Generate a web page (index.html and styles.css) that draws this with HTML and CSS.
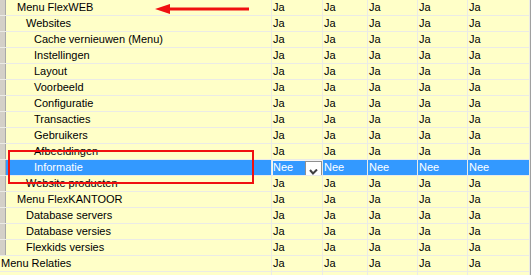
FILE: index.html
```html
<!DOCTYPE html>
<html lang="en">
<head>
<meta charset="UTF-8">
<title>Rechten</title>
<link rel="stylesheet" href="styles.css">
</head>
<body>
    <div class="grid">
        <div class="row nested"><div class="tree l1">Menu FlexWEB</div><div class="cell">Ja</div><div class="cell">Ja</div><div class="cell">Ja</div><div class="cell">Ja</div><div class="cell">Ja</div></div>
        <div class="row nested"><div class="tree l2">Websites</div><div class="cell">Ja</div><div class="cell">Ja</div><div class="cell">Ja</div><div class="cell">Ja</div><div class="cell">Ja</div></div>
        <div class="row nested"><div class="tree l3">Cache vernieuwen (Menu)</div><div class="cell">Ja</div><div class="cell">Ja</div><div class="cell">Ja</div><div class="cell">Ja</div><div class="cell">Ja</div></div>
        <div class="row nested"><div class="tree l3">Instellingen</div><div class="cell">Ja</div><div class="cell">Ja</div><div class="cell">Ja</div><div class="cell">Ja</div><div class="cell">Ja</div></div>
        <div class="row nested"><div class="tree l3">Layout</div><div class="cell">Ja</div><div class="cell">Ja</div><div class="cell">Ja</div><div class="cell">Ja</div><div class="cell">Ja</div></div>
        <div class="row nested"><div class="tree l3">Voorbeeld</div><div class="cell">Ja</div><div class="cell">Ja</div><div class="cell">Ja</div><div class="cell">Ja</div><div class="cell">Ja</div></div>
        <div class="row nested"><div class="tree l3">Configuratie</div><div class="cell">Ja</div><div class="cell">Ja</div><div class="cell">Ja</div><div class="cell">Ja</div><div class="cell">Ja</div></div>
        <div class="row nested"><div class="tree l3">Transacties</div><div class="cell">Ja</div><div class="cell">Ja</div><div class="cell">Ja</div><div class="cell">Ja</div><div class="cell">Ja</div></div>
        <div class="row nested"><div class="tree l3">Gebruikers</div><div class="cell">Ja</div><div class="cell">Ja</div><div class="cell">Ja</div><div class="cell">Ja</div><div class="cell">Ja</div></div>
        <div class="row nested"><div class="tree l3">Afbeeldingen</div><div class="cell">Ja</div><div class="cell">Ja</div><div class="cell">Ja</div><div class="cell">Ja</div><div class="cell">Ja</div></div>
        <div class="row nested selected">
            <div class="tree l3">Informatie</div>
            <div class="cell editor">
                <span>Nee</span>
                <span class="drop">
                    <svg width="9" height="6" viewBox="0 0 9 6"><path d="M1 1 L4 4.5 L8 0.5" fill="none" stroke="#404040" stroke-width="2"/></svg>
                </span>
            </div>
            <div class="cell">Nee</div><div class="cell">Nee</div><div class="cell">Nee</div><div class="cell">Nee</div>
        </div>
        <div class="row nested"><div class="tree l2">Website producten</div><div class="cell">Ja</div><div class="cell">Ja</div><div class="cell">Ja</div><div class="cell">Ja</div><div class="cell">Ja</div></div>
        <div class="row nested"><div class="tree l1">Menu FlexKANTOOR</div><div class="cell">Ja</div><div class="cell">Ja</div><div class="cell">Ja</div><div class="cell">Ja</div><div class="cell">Ja</div></div>
        <div class="row nested"><div class="tree l2">Database servers</div><div class="cell">Ja</div><div class="cell">Ja</div><div class="cell">Ja</div><div class="cell">Ja</div><div class="cell">Ja</div></div>
        <div class="row nested"><div class="tree l2">Database versies</div><div class="cell">Ja</div><div class="cell">Ja</div><div class="cell">Ja</div><div class="cell">Ja</div><div class="cell">Ja</div></div>
        <div class="row nested"><div class="tree l2">Flexkids versies</div><div class="cell">Ja</div><div class="cell">Ja</div><div class="cell">Ja</div><div class="cell">Ja</div><div class="cell">Ja</div></div>
        <div class="row"><div class="tree l0">Menu Relaties</div><div class="cell">Ja</div><div class="cell">Ja</div><div class="cell">Ja</div><div class="cell">Ja</div><div class="cell">Ja</div></div>
        <div class="row"><div class="tree l0"></div><div class="cell"></div><div class="cell"></div><div class="cell"></div><div class="cell"></div><div class="cell"></div></div>
    </div>

    <!-- annotations drawn over the grid -->
    <svg class="arrow" width="100" height="14" viewBox="0 0 100 14">
        <polygon points="0,7 15,2 15,12" fill="#f01010"/>
        <rect x="14" y="5.5" width="80" height="3" fill="#f01010"/>
    </svg>
    <div class="mark-box"></div>
</body>
</html>
```

FILE: styles.css
```css
body {
    margin: 0;
    padding: 0;
    background-color: #ffffc8;
    font-family: "Liberation Sans", Arial, sans-serif;
    font-size: 11px;
    position: relative;
    overflow: hidden;
    height: 275px;
}

.grid {
    width: 531px;
    border-right: 1px solid #a0a0a0;
    box-sizing: border-box;
}

.row {
    display: grid;
    grid-template-columns: 272px 51px 45px 50px 50px 62px;
    height: 16px;
}

.row > div {
    height: 15px;
    line-height: 15px;
    border-bottom: 1px solid #ebebe6;
    border-right: 1px solid #ebebe6;
    white-space: nowrap;
    overflow: hidden;
    color: #000;
}

.cell {
    padding-left: 1px;
}

.tree.l0 { padding-left: 1px; }
.tree.l1 { padding-left: 17px; }
.tree.l2 { padding-left: 26px; }
.tree.l3 { padding-left: 34px; }

.row.nested .tree {
    background: linear-gradient(to right, #d4d0c8 0 5px, #a8a8a8 5px 6px, transparent 6px);
}

.row.nested .tree::before {
    content: "";
}

.selected > div {
    background-color: #3399ff;
    color: #fff;
}

.row.nested.selected .tree {
    background: linear-gradient(to right, #d4d0c8 0 5px, #a8a8a8 5px 6px, #3399ff 6px);
}

.editor {
    display: flex;
    justify-content: space-between;
    box-shadow: inset 1px 1px 0 #f4f4f4;
}

.drop {
    width: 15px;
    height: 13px;
    margin-top: 1px;
    background-color: #fff;
    border: 1px solid #909090;
    display: flex;
    align-items: flex-end;
    justify-content: center;
    padding-bottom: 1px;
    box-sizing: content-box;
}

.arrow {
    position: absolute;
    left: 155px;
    top: 2px;
}

.mark-box {
    position: absolute;
    left: 8px;
    top: 150px;
    width: 246px;
    height: 34px;
    border: 2px solid #f01010;
    box-sizing: border-box;
}
```
